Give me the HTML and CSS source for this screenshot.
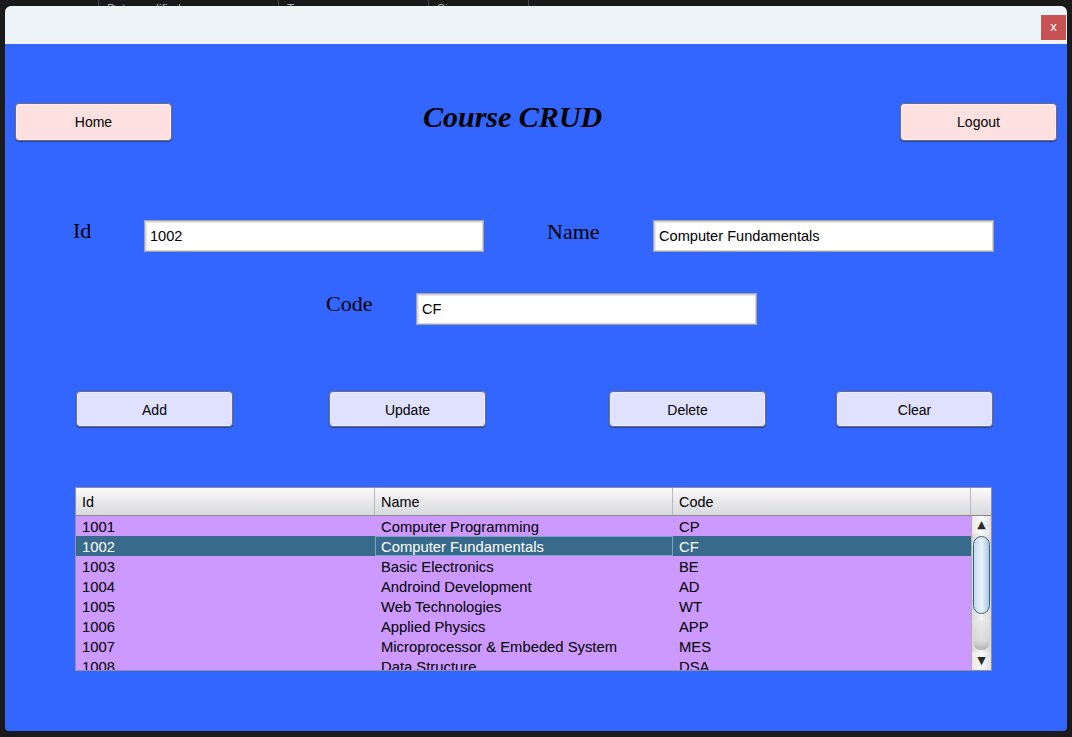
FILE: index.html
```html
<!DOCTYPE html>
<html>
<head>
<meta charset="utf-8">
<link rel="stylesheet" href="styles.css">
</head>
<body>
<div class="desk">
  <div class="desk-head">
    <span class="dh-col c1"></span>
    <span class="dh-col c2">Date modified</span>
    <span class="dh-col c3">Type</span>
    <span class="dh-col c4">Size</span>
  </div>
  <div class="window">
    <div class="titlebar">
      <button class="close">x</button>
    </div>
    <div class="content">
      <div class="toprow">
        <button class="btn pink">Home</button>
        <h1 class="title">Course CRUD</h1>
        <div class="spacer"></div>
        <button class="btn pink">Logout</button>
      </div>
      <div class="form-row row1">
        <label class="lbl lbl-id">Id</label>
        <div class="field w340">1002</div>
        <label class="lbl lbl-name">Name</label>
        <div class="field w341">Computer Fundamentals</div>
      </div>
      <div class="form-row row2">
        <label class="lbl lbl-code">Code</label>
        <div class="field w341">CF</div>
      </div>
      <div class="actions">
        <button class="btn lav b-add">Add</button>
        <button class="btn lav b-upd">Update</button>
        <button class="btn lav b-del">Delete</button>
        <button class="btn lav b-clr">Clear</button>
      </div>
      <div class="table">
        <div class="thead">
          <div class="th">Id</div>
          <div class="th">Name</div>
          <div class="th">Code</div>
          <div class="th corner"></div>
        </div>
        <div class="tbody">
          <div class="rows">
            <div class="tr"><div class="td">1001</div><div class="td">Computer Programming</div><div class="td">CP</div></div>
            <div class="tr sel"><div class="td">1002</div><div class="td focus">Computer Fundamentals</div><div class="td">CF</div></div>
            <div class="tr"><div class="td">1003</div><div class="td">Basic Electronics</div><div class="td">BE</div></div>
            <div class="tr"><div class="td">1004</div><div class="td">Androind Development</div><div class="td">AD</div></div>
            <div class="tr"><div class="td">1005</div><div class="td">Web Technologies</div><div class="td">WT</div></div>
            <div class="tr"><div class="td">1006</div><div class="td">Applied Physics</div><div class="td">APP</div></div>
            <div class="tr"><div class="td">1007</div><div class="td">Microprocessor &amp; Embeded System</div><div class="td">MES</div></div>
            <div class="tr"><div class="td">1008</div><div class="td">Data Structure</div><div class="td">DSA</div></div>
          </div>
          <div class="scrollbar">
            <div class="arrow up">&#9650;</div>
            <div class="track">
              <div class="thumb"></div>
              <div class="track-end"></div>
            </div>
            <div class="arrow down">&#9660;</div>
          </div>
        </div>
      </div>
    </div>
  </div>
</div>
</body>
</html>
```
FILE: styles.css
```css
html, body {
  margin: 0;
  padding: 0;
  background: #1b1b1b;
}
body {
  width: 1072px;
  height: 737px;
  overflow: hidden;
  font-family: "Liberation Sans", Arial, sans-serif;
}
.desk {
  position: relative;
  width: 1072px;
  height: 737px;
}
.desk-head {
  display: flex;
  height: 6px;
  overflow: hidden;
  background: #191919;
}
.dh-col {
  display: block;
  box-sizing: border-box;
  border-right: 1px solid #4a4a4a;
  color: #a8a8a8;
  font-size: 12px;
  line-height: 12px;
  padding: 3px 0 0 8px;
}
.c1 { width: 99px; }
.c2 { width: 180px; }
.c3 { width: 150px; }
.c4 { width: 100px; }

.window {
  margin-left: 5px;
  width: 1062px;
  height: 725px;
  border-radius: 6px 6px 4px 4px;
  overflow: hidden;
  display: flex;
  flex-direction: column;
}
.titlebar {
  height: 38px;
  background: #edf4f8;
  display: flex;
  justify-content: flex-end;
  align-items: flex-start;
  padding-right: 1px;
}
.close {
  margin-top: 9px;
  width: 25px;
  height: 25px;
  border: none;
  padding: 0;
  background: #c65253;
  color: #fff;
  font-family: "DejaVu Sans", sans-serif;
  font-size: 12px;
  line-height: 23px;
}
.content {
  flex: 1;
  background: #3366ff;
  padding-top: 59px;
}
.toprow {
  display: flex;
  align-items: flex-start;
  padding: 0 10px;
  height: 38px;
}
.btn {
  box-sizing: border-box;
  width: 157px;
  border: 1px solid #6e6e7a;
  border-radius: 4px;
  box-shadow: 0 1px 1px rgba(0, 0, 0, 0.35), inset 0 0 0 1px rgba(255,255,255,0.35);
  font-family: "Liberation Sans", Arial, sans-serif;
  font-size: 14px;
  color: #000;
  padding: 0;
}
.pink {
  height: 38px;
  background: #ffe0e0;
}
.lav {
  height: 36px;
  background: #e0e0ff;
  padding-top: 1px;
}
.title {
  margin: -1px 0 0 251px;
  font-family: "Liberation Serif", "Times New Roman", serif;
  font-style: italic;
  font-weight: bold;
  font-size: 30px;
  line-height: 30px;
  color: #000;
}
.spacer { flex: 1; }

.form-row {
  display: flex;
  align-items: flex-start;
}
.row1 {
  margin-top: 79px;
  padding-left: 68px;
}
.row2 {
  margin-top: 41px;
  padding-left: 321px;
}
.lbl {
  font-family: "Liberation Serif", "Times New Roman", serif;
  font-size: 22px;
  line-height: 22px;
  color: #000;
}
.lbl-id { width: 71px; }
.lbl-name { width: 106px; margin-left: 63px; padding-top: 1px; }
.lbl-code { width: 90px; }
.field {
  box-sizing: border-box;
  height: 32px;
  background: #fff;
  border: 1px solid #a3a3a3;
  box-shadow: inset 0 0 0 1px #d6d6d6, inset 1px 1px 0 1px #e6e6e6;
  font-size: 14.6px;
  line-height: 30px;
  padding-left: 5px;
  color: #000;
}
.w340 { width: 340px; }
.w341 { width: 341px; }

.actions {
  display: flex;
  margin-top: 66px;
  padding-left: 71px;
}
.b-upd { margin-left: 96px; }
.b-del { margin-left: 123px; }
.b-clr { margin-left: 70px; }

.table {
  margin: 60px 0 0 70px;
  width: 917px;
  box-sizing: border-box;
  border: 1px solid #8f8f9f;
  background: #cc99ff;
}
.thead {
  display: flex;
  height: 27px;
  background: linear-gradient(#fbfbfb, #e9e9ec 50%, #d9dade);
  border-bottom: 1px solid #8a8a8a;
}
.th {
  box-sizing: border-box;
  width: 298px;
  border-right: 1px solid #b8b8c0;
  font-size: 14.4px;
  line-height: 27px;
  padding: 1px 0 0 6px;
  color: #000;
}
.th:first-child { width: 299px; }
.th.corner { width: 20px; border-right: none; }
.tbody {
  display: flex;
  height: 154px;
  overflow: hidden;
}
.rows {
  width: 895px;
}
.tr {
  display: flex;
  height: 20px;
}
.td {
  box-sizing: border-box;
  width: 298px;
  font-size: 14.8px;
  line-height: 20px;
  padding: 1px 0 0 6px;
  color: #000;
  white-space: nowrap;
}
.td:first-child { width: 299px; }
.tr.sel { background: #386a8b; }
.tr.sel .td { color: #fff; }
.td.focus {
  border: 1px solid #7ba4c8;
  line-height: 18px;
  padding: 1px 0 0 5px;
}
.scrollbar {
  width: 20px;
  display: flex;
  flex-direction: column;
  background: linear-gradient(90deg, #d8d8d8, #f4f4f4 50%, #d8d8d8);
  border-left: 1px solid #b0b0b0;
}
.arrow {
  height: 18px;
  font-family: "DejaVu Sans", sans-serif;
  font-size: 11px;
  line-height: 18px;
  text-align: center;
  color: #2a2a2a;
  background: linear-gradient(90deg, #e8e8e8, #fafafa 50%, #e0e0e0);
}
.track {
  flex: 1;
  display: flex;
  flex-direction: column;
  padding: 2px 0;
}
.thumb {
  height: 76px;
  margin: 0 1px 0 1px;
  border: 1px solid #3f5f80;
  border-radius: 9px;
  background: linear-gradient(90deg, #c3daf0, #e8f3fb 50%, #a8c8e6);
}
.track-end {
  flex: 1;
  background: linear-gradient(#e6e6e6, #cfcfcf 70%, #8a8a8a);
  margin: 6px 1px 0 1px;
  border-radius: 0 0 8px 8px;
  opacity: 0.6;
}
```
